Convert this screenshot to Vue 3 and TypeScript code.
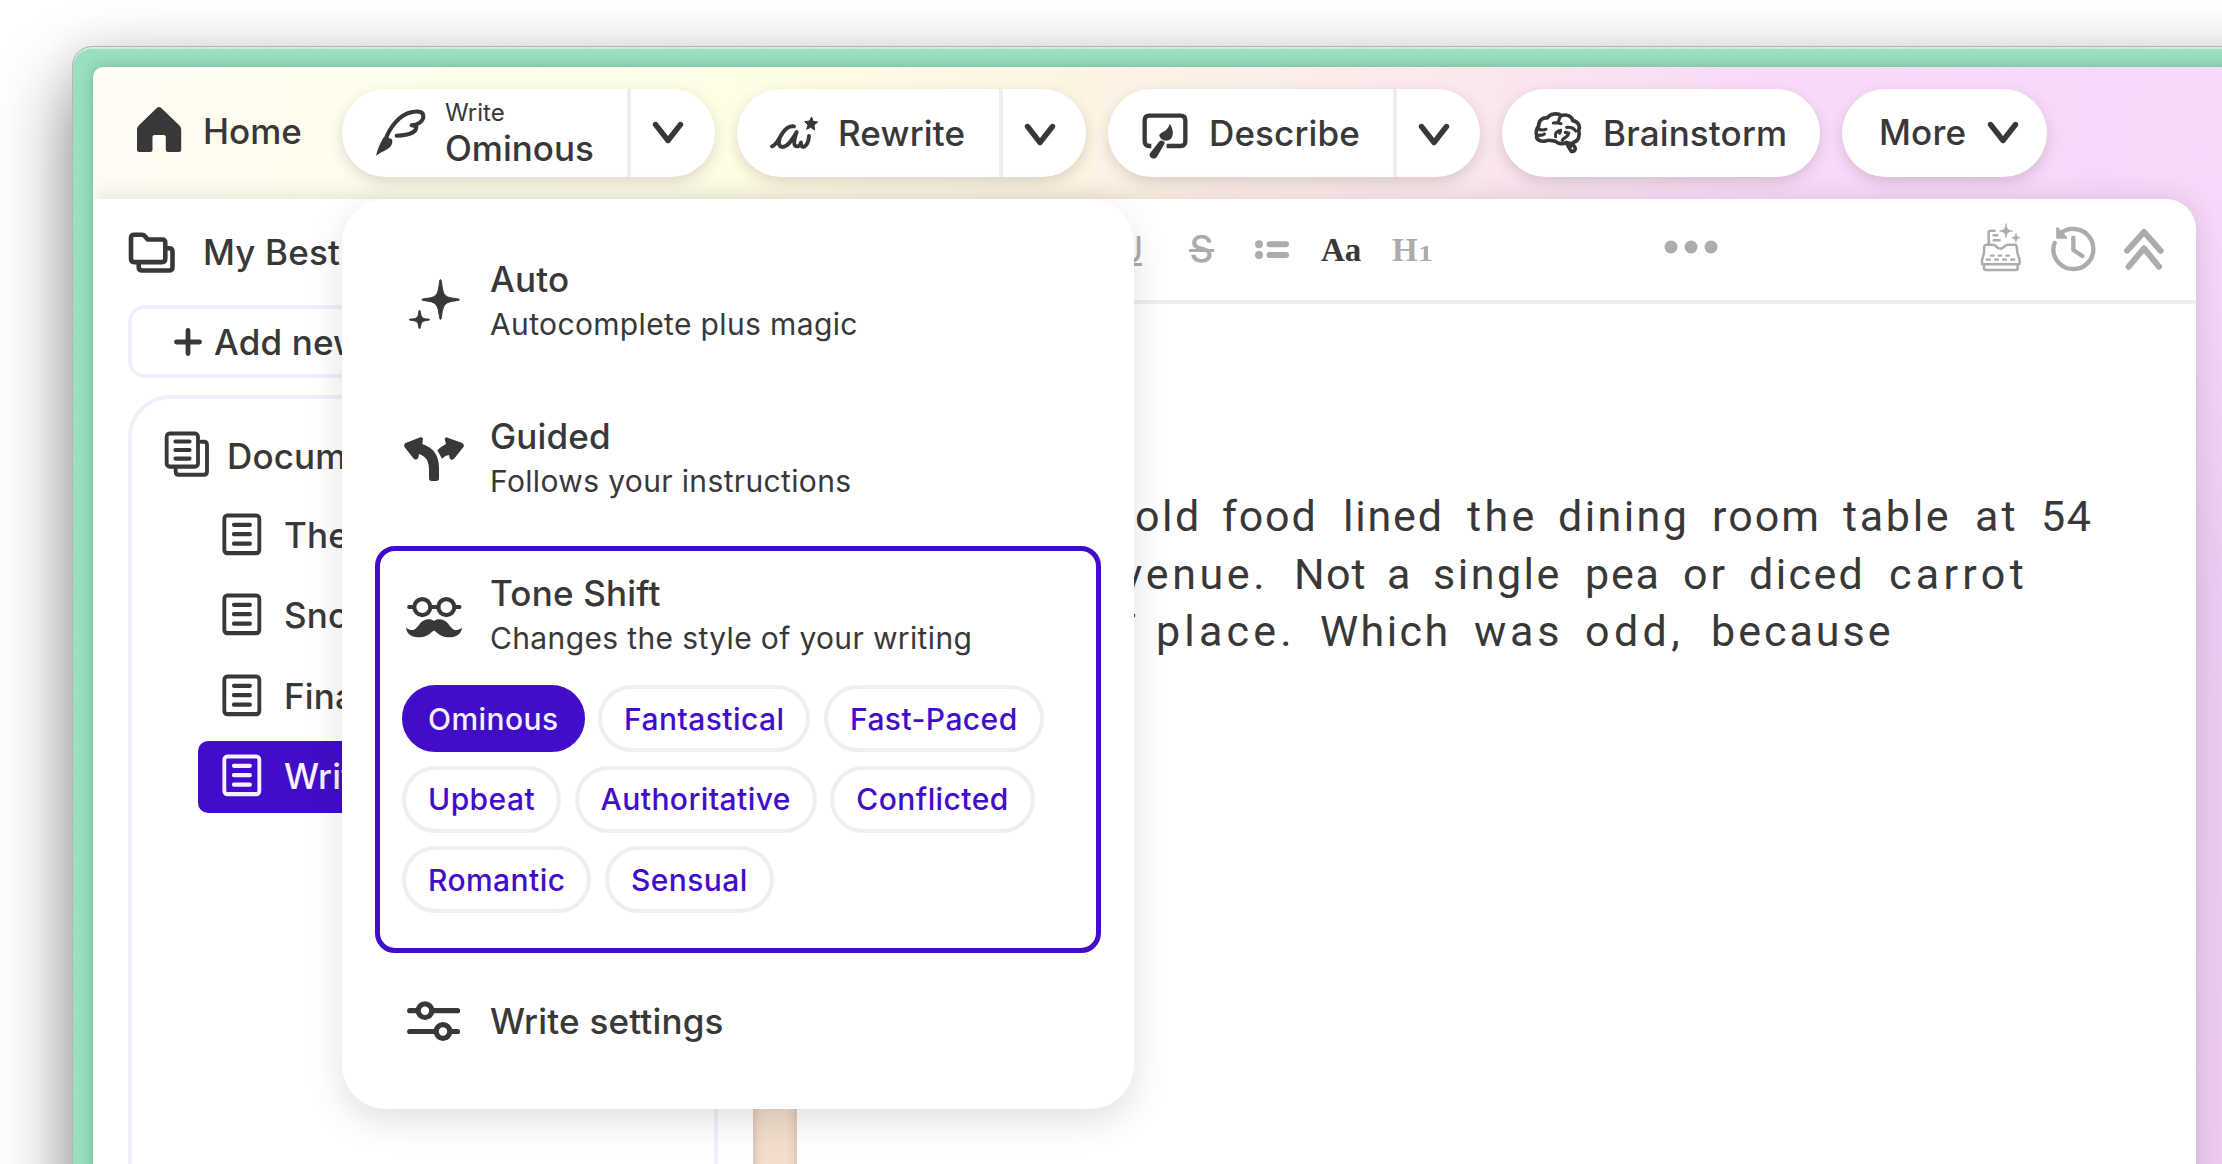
<script setup lang="ts">
import { ref } from 'vue'

interface Word { text: string; width: number; tracking: number }
interface Line { indent: number; words: Word[] }

const documents: { name: string; selected: boolean }[] = [
  { name: 'The End', selected: false },
  { name: 'Snow', selected: false },
  { name: 'Finale', selected: false },
  { name: 'Writing', selected: true },
]

const tones: string[][] = [
  ['Ominous', 'Fantastical', 'Fast-Paced'],
  ['Upbeat', 'Authoritative', 'Conflicted'],
  ['Romantic', 'Sensual'],
]
const activeTone = ref('Ominous')

const w = (text: string, width: number, tracking = 1.5): Word => ({ text, width, tracking })
const lines: Line[] = [
  {
    indent: 1110,
    words: [w('cold', 112, 2.5), w('food', 121, 1.8), w('lined', 124, 1.8), w('the', 91, 3.4), w('dining', 154, 2.4), w('room', 131, 2), w('table', 132, 2.7), w('at', 66, 3), w('54', 60, 1.5)],
  },
  {
    indent: 1091,
    words: [w('Avenue.', 203, 3.6), w('Not', 93, 1.2), w('a', 46), w('single', 152, 2.5), w('pea', 98, 1.8), w('or', 66, 3), w('diced', 140, 2.4), w('carrot', 150, 4.3)],
  },
  {
    indent: 1094,
    words: [w('of', 62), w('place.', 164, 4.2), w('Which', 154, 2.4), w('was', 111, 3.8), w('odd,', 126, 4.4), w('because', 200, 3)],
  },
]
</script>

<template>
  <div class="desk">
    <div class="frame">
      <svg class="grain" aria-hidden="true">
        <filter id="grain"><feTurbulence type="fractalNoise" baseFrequency="0.35" numOctaves="2" seed="4" /><feColorMatrix type="matrix" values="0 0 0 0 0.35  0 0 0 0 0.65  0 0 0 0 0.62  0 0 0 1.6 -0.62" /></filter>
        <rect width="100%" height="100%" filter="url(#grain)" />
      </svg>
      <div class="window">
        <header class="topbar">
          <div class="home">
            <svg width="46" height="48" viewBox="136 106 46 48"><path fill="#383838" d="M157 107.800Q159 106.200 161 107.800L179.500 125.500Q181.200 127.500 181.200 130V149.500Q181.200 152 178.700 152H168Q165.800 152 165.800 149.500V137Q165.800 135 163.800 135H154.500Q152.500 135 152.500 137V149.500Q152.500 152 150 152H139.500Q137 152 137 149.500V130Q137 127.500 138.700 125.500Z" /></svg>
            <span class="label">Home</span>
          </div>

          <div class="pill write">
            <div class="main">
              <svg width="52" height="48" viewBox="45 55 156 144" fill="none" stroke="#383838" stroke-width="12" stroke-linecap="round" stroke-linejoin="round">
                <path d="M76 150C88 117 116 74 157 67C176 64 191 65 190 82C189 96 172 106 155 107L169 110C171 124 155 137 110 138" />
                <path stroke="none" fill="#383838" d="M48 198C52 180 61 160 71 143L84 139C86 146 90 147 96 149C101 165 88 178 72 184C63 188 56 193 48 198Z" />
              </svg>
              <div class="two">
                <span class="small">Write</span>
                <span class="label">Ominous</span>
              </div>
            </div>
            <div class="drop"><svg class="chev" viewBox="0 0 32 24"><path d="M3.500 3.500L16 19.500L28.500 3.500" /></svg></div>
          </div>

          <div class="pill rewrite">
            <div class="main">
              <svg width="50" height="36" viewBox="1227 76 150 108" fill="none" stroke="#383838" stroke-width="11.500" stroke-linecap="round" stroke-linejoin="round">
                <path d="M1236 170C1251 165 1258 143 1269 128C1279 114 1290 108 1302 110M1268 130C1254 147 1252 171 1268 172C1286 171 1298 146 1310 127C1305 141 1301 153 1303 163C1306 174 1320 172 1323 158C1322 170 1327 173 1332 171C1342 166 1346 153 1347 139" />
                <path stroke-width="3" fill="#383838" d="M1355 83L1359 95L1373 97L1362 106L1364 121L1352 113L1340 119L1344 106L1334 96L1348 94Z" />
              </svg>
              <span class="label">Rewrite</span>
            </div>
            <div class="drop"><svg class="chev" viewBox="0 0 32 24"><path d="M3.500 3.500L16 19.500L28.500 3.500" /></svg></div>
          </div>

          <div class="pill describe">
            <div class="main">
              <svg width="46" height="48" viewBox="97 65 138 144" fill="none" stroke="#383838" stroke-width="13" stroke-linecap="butt">
                <path d="M125 167H119Q105 167 105 153V90Q105 76 119 76H213Q227 76 227 90V153Q227 167 213 167H171" />
                <path stroke="none" fill="#383838" d="M180 100C189 112 193 130 186 142C179 154 163 153 154 145L149 137C149 123 174 127 180 100ZM148 154Q156 146 165 155Q166 160 162 165L142 199Q136 208 126 203Q117 198 121 189Z" />
              </svg>
              <span class="label">Describe</span>
            </div>
            <div class="drop"><svg class="chev" viewBox="0 0 32 24"><path d="M3.500 3.500L16 19.500L28.500 3.500" /></svg></div>
          </div>

          <div class="pill brain">
            <svg width="50" height="46" viewBox="1270 60 150 138" fill="none" stroke="#383838" stroke-width="11" stroke-linecap="round" stroke-linejoin="round">
              <path d="M1281 137C1278 124 1280 116 1287 108C1286 93 1298 82 1313 84C1320 70 1345 68 1354 77C1371 71 1388 80 1389 92C1406 95 1413 109 1407 122C1412 138 1406 153 1392 157C1388 161 1378 160 1371 157C1360 163 1345 162 1338 154C1328 153 1320 148 1310 152C1295 157 1279 150 1281 137Z" />
              <path d="M1371 160C1376 168 1379 177 1385 184C1395 186 1399 178 1395 170C1392 165 1388 164 1384 168" />
              <path stroke-width="9.500" d="M1353 79C1346 85 1351 92 1343 98L1331 99M1343 98L1354 101M1284 116C1293 121 1301 121 1309 118M1286 137C1292 133 1298 139 1304 132M1371 112C1384 111 1393 115 1398 123M1377 129C1376 142 1363 141 1358 151M1377 129L1367 127M1353 121C1340 122 1335 132 1338 140M1353 121L1350 130" />
            </svg>
            <span class="label">Brainstorm</span>
          </div>

          <div class="pill more">
            <span class="label">More</span>
            <svg class="chev" viewBox="0 0 32 24"><path d="M3.500 3.500L16 19.500L28.500 3.500" /></svg>
          </div>
        </header>

        <div class="page">
          <aside class="sidebar">
            <div class="project">
              <svg width="48" height="42" viewBox="127.500 232.500 48 42" fill="none" stroke="#383838" stroke-width="4.600" stroke-linejoin="round">
                <path d="M130.500 238.500Q130.500 235.300 133.700 235.300H141.500Q143.300 235.300 144.500 236.800L147.200 240H161.500Q164.800 240 164.800 243.200V259.300Q164.800 262.600 161.500 262.600H133.700Q130.500 262.600 130.500 259.300Z" />
                <path d="M138.200 264V267.500Q138.200 271 141.700 271H168.500Q172 271 172 267.500V252Q172 248.700 168.700 248.700H166" />
              </svg>
              <span class="label">My Best</span>
            </div>
            <div class="add">
              <svg width="28" height="28" viewBox="0 0 28 28" stroke="#383838" stroke-width="4.800" stroke-linecap="round"><path d="M14 2.500V25.500M2.500 14H25.500" /></svg>
              <span class="label">Add new</span>
            </div>
            <div class="tree">
              <div class="root">
                <svg width="46" height="47" viewBox="192 424 138 132" preserveAspectRatio="none" fill="none" stroke="#383838" stroke-width="11.500" stroke-linecap="round" stroke-linejoin="round">
                  <rect x="200" y="431" width="94" height="93" rx="9" />
                  <path d="M303 454H312Q321 454 321 463V538Q321 547 312 547H236Q227 547 227 538V529M226 453.500H269M226 477.500H269M226 501.500H269" />
                </svg>
                <span class="label">Documents</span>
              </div>
              <div v-for="doc in documents" :key="doc.name" class="doc" :class="{ selected: doc.selected }">
                <svg width="40" height="43" viewBox="366 655 120 120" preserveAspectRatio="none" fill="none" stroke="currentColor" stroke-width="11.500" stroke-linecap="round">
                  <rect x="373" y="662" width="105" height="105" rx="9" />
                  <path d="M401.500 688H450M401.500 714H450M401.500 740.500H450" />
                </svg>
                <span class="label">{{ doc.name }}</span>
              </div>
            </div>
          </aside>

          <main class="editor">
            <div class="toolbar">
              <span class="fmt u">U</span>
              <span class="fmt s">S</span>
              <svg class="list" width="34" height="20" viewBox="0 0 34 20" fill="#acacac"><circle cx="4" cy="4.200" r="4" /><circle cx="4" cy="15" r="4" /><rect x="11.500" y="1.300" width="22.500" height="6" rx="3" /><rect x="11.500" y="12" width="22.500" height="6" rx="3" /></svg>
              <span class="serif aa">Aa</span>
              <span class="serif h1">H<small>1</small></span>
              <svg class="dots" width="54" height="14" viewBox="0 0 54 14" fill="#acacac"><circle cx="7" cy="7" r="6.500" /><circle cx="27" cy="7" r="6.500" /><circle cx="47" cy="7" r="6.500" /></svg>
              <svg class="tools" width="190" height="50" viewBox="120 70 570 150" fill="none" stroke="#acacac" stroke-linecap="round" stroke-linejoin="round">
                <g stroke-width="7.500">
                  <path d="M146 135V99Q146 93 152 93H164M161 107H172M161 122H179M138 135H160C168 135 169 147 181 147C193 147 194 135 203 135H224Q229 135 230 140L232 158C234 170 239 174 239 184V190Q239 194 234 194H130Q126 194 126 190V184C126 174 131 170 132 158L133 140Q134 135 138 135ZM132 196V205Q132 211 138 211H227Q233 211 233 205V196" />
                  <path d="M153 168H161M176 168H184M199 168H207M140 180H150M165 180H174M189 180H198M213 180H223" stroke-width="6.500" />
                </g>
                <path fill="#acacac" stroke="#acacac" stroke-width="2" d="M198 73C200 88 203 92 218 94C203 96 200 100 198 115C196 100 193 96 178 94C193 92 196 88 198 73ZM228 101C229 110 231 113 240 114C231 116 229 118 228 128C226 118 224 116 215 114C224 113 226 110 228 101Z" />
                <g stroke-width="13">
                  <path d="M362 101C375 90 390 87 403 88C435 90 460 115 460 148C460 181 434 208 400 208C367 208 340 181 340 149Q340 138 344 130M400 114V151L427 169" />
                  <path fill="#acacac" stroke-width="7" d="M352 86V114H378Z" />
                </g>
                <path stroke-width="18" d="M561 153L612 97L662 153M566 201L612 146L657 201" />
              </svg>
            </div>
            <div class="body">
              <div class="bar"></div>
              <div class="prose">
                <p v-for="(line, i) in lines" :key="i" :style="{ paddingLeft: line.indent - 797 + 'px' }">
                  <span v-for="word in line.words" :key="word.text" class="word" :style="{ width: word.width + 'px', letterSpacing: word.tracking + 'px' }">{{ word.text + ' ' }}</span>
                </p>
              </div>
            </div>
          </main>

          <div class="menu">
            <div class="item">
              <svg width="60" height="52" viewBox="132 110 180 156" fill="#383838" stroke="#383838" stroke-width="3" stroke-linejoin="round"><path d="M241 118C244 118 244 122 245 130C250 168 255 171 290 175C296 176 298 176 298 178C298 180 296 180 290 181C255 185 250 190 245 226C244 234 244 237 241 237C239 237 239 234 238 226C233 190 228 185 193 181C188 180 186 180 186 178C186 176 188 176 193 175C228 171 233 168 238 130C239 122 239 118 241 118ZM178.500 210C180 210 181 212 181.500 217C184 233 188 235 204 236Q209 237 209 238Q209 239 204 240C188 242 184 244 181.500 259Q181 265 178.500 265Q177 265 176 259C174 244 169 242 153 240Q148 239 148 238Q148 237 153 236C169 235 174 233 176 217C176.500 212 177 210 178.500 210Z" /></svg>
              <div class="copy"><span class="label">Auto</span><span class="sub">Autocomplete plus magic</span></div>
            </div>
            <div class="item">
              <svg width="60" height="52" viewBox="132 587 180 156" fill="#383838"><path d="M189 602L187 617C222 629 237 652 237 690V720Q237 728 229 728H215Q207 728 207 720V695C207 668 198 655 177 647L175 658Q170 667 162 662L134 627Q130 618 137 614L181 597Q189 596 189 602ZM232 636Q244 624 258 617L254 602Q256 595 263 598L307 614Q313 618 311 625L282 661Q274 667 270 661L267 650Q256 651 246 661Z" /></svg>
              <div class="copy"><span class="label">Guided</span><span class="sub">Follows your instructions</span></div>
            </div>
            <div class="item tone">
              <svg width="60" height="52" viewBox="912 871 180 146" preserveAspectRatio="none" fill="none" stroke="#383838" stroke-width="12"><ellipse cx="967" cy="916" rx="24" ry="22.500" /><ellipse cx="1039" cy="916" rx="24" ry="22.500" /><path stroke-linecap="round" stroke-width="11" d="M927 916H940M990 916H1016M1066 916H1079" /><path stroke="none" fill="#383838" d="M1002 955C993 947 972 949 962 960C950 974 941 990 918 974C920 997 945 1004 968 1000C985 997 994 987 1002 982C1010 987 1019 997 1036 1000C1059 1004 1084 997 1086 974C1063 990 1054 974 1042 960C1032 949 1011 947 1002 955Z" /></svg>
              <div class="copy"><span class="label">Tone Shift</span><span class="sub">Changes the style of your writing</span></div>
              <div class="chips">
                <div v-for="(row, i) in tones" :key="i" class="row">
                  <button v-for="tone in row" :key="tone" class="chip" :class="{ on: tone === activeTone }" @click="activeTone = tone">{{ tone }}</button>
                </div>
              </div>
            </div>
            <div class="item settings">
              <svg width="60" height="44" viewBox="404 999 60 44" fill="none" stroke="#383838" stroke-width="5.200" stroke-linecap="round"><path d="M409.700 1010.700H417M433 1010.700H457.500M409.700 1031.500H435M451 1031.500H457.500" /><circle cx="425" cy="1010.700" r="6.800" /><circle cx="443" cy="1031.500" r="6.800" /></svg>
              <span class="label">Write settings</span>
            </div>
          </div>
        </div>
      </div>
    </div>
  </div>
</template>

<style>
body { margin: 0; background: #fff; }
</style>

<style scoped>
* { box-sizing: border-box; }
svg { flex: none; display: block; }
.desk { position: relative; width: 2222px; height: 1164px; overflow: hidden; padding: 46px 0 0 72px; background: #fff; color: #383838; font-family: Inter, sans-serif; }
.frame { position: relative; width: 2400px; height: 1400px; padding: 20px; border: 1px solid #b4b4b4; border-radius: 20px; background: #9be0bf; box-shadow: inset 0 2px 1px rgba(255, 255, 255, .55), 0 36px 76px rgba(0, 0, 0, .48), 0 0 40px rgba(0, 0, 0, .07); }
.grain { position: absolute; inset: 0; width: 100%; height: 100%; border-radius: 20px; opacity: .45; }
.window { position: relative; height: 1340px; border-radius: 10px; overflow: hidden; background: linear-gradient(97deg, #fffcf5 0, #fffdeb 300px, #fffde6 640px, #fdf6e2 930px, #fbe9ec 1330px, #f8dbf8 1650px, #f8d8fa 2000px, #f5dcfb 2250px); }
.window::before { content: ''; position: absolute; inset: 100px 0 0 2000px; background: linear-gradient(180deg, rgba(234, 200, 240, 0), rgba(234, 200, 240, .9) 420px, #eccbee 1064px); }
.frame::after { content: ''; position: absolute; left: 20px; top: 20px; right: 20px; height: 1340px; border-radius: 10px; box-shadow: 0 0 14px rgba(20, 80, 60, .3); pointer-events: none; }
.topbar { position: relative; display: flex; height: 132px; padding-top: 22px; gap: 22px; }
.home { display: flex; align-items: flex-start; width: 227px; padding-left: 43px; }
.home svg { margin-top: 17px; }
.home .label { margin: 20px 0 0 21px; letter-spacing: 0; }
.label { font-size: 35px; line-height: 44px; font-weight: 500; letter-spacing: .15px; white-space: nowrap; }
.pill { display: flex; height: 88px; border-radius: 44px; background: #fff; box-shadow: 0 5px 14px rgba(60, 40, 40, .17); }
.main { display: flex; }
.drop { flex: 1; border-left: 4px solid #eee; }
.chev { width: 32px; height: 24px; fill: none; stroke: #383838; stroke-width: 5.400; stroke-linecap: round; stroke-linejoin: round; }
.write { width: 373px; }
.write .main { width: 285px; padding: 19px 0 0 33px; }
.two { display: flex; flex-direction: column; margin: -10px 0 0 18px; }
.small { font-size: 24px; line-height: 30px; }
.two .label { margin-top: -2px; letter-spacing: 0; }
.write .chev { margin: 32px 0 0 21px; }
.rewrite { width: 349px; }
.rewrite .main { width: 262px; padding: 26px 0 0 32px; }
.rewrite .label { margin: -4px 0 0 19px; }
.rewrite .chev { margin: 34px 0 0 21px; }
.describe { width: 372px; }
.describe .main { width: 285px; padding: 23px 0 0 34px; }
.describe .label { margin: -1px 0 0 21px; }
.describe .chev { margin: 34px 0 0 21px; }
.brain { width: 318px; padding: 21px 0 0 31px; }
.brain .label { margin: 1px 0 0 20px; }
.more { width: 205px; padding: 21px 0 0 37px; }
.more .chev { margin: 11px 0 0 21px; }

.page { position: relative; display: flex; width: 2103px; height: 1208px; border-radius: 0 30px 0 0; background: #fff; box-shadow: 0 0 26px rgba(70, 50, 60, .16); }
.sidebar { width: 625px; margin-right: 35px; padding-left: 35px; }
.project { display: flex; height: 106px; padding-top: 33px; }
.project .label { margin: -2px 0 0 27px; }
.add { display: flex; height: 73px; border: 4px solid #f2effc; border-radius: 17px; padding: 19px 0 0 42px; }
.add .label { margin: -8px 0 0 12px; }
.tree { height: 1000px; margin-top: 17px; border: 4px solid #f2effc; border-radius: 42px; padding: 32px 20px 0 32px; }
.root { display: flex; height: 66px; }
.root .label { margin: 3px 0 0 17px; }
.doc { display: flex; height: 72px; margin: 0 0 8.300px 34px; padding: 13px 0 0 24px; border-radius: 10px; }
.root + .doc { margin-top: 3px; }
.doc .label { margin: 0 0 0 22px; }
.doc.selected { background: #420dc8; color: #f4f0ff; }

.editor { flex: 1; display: flex; flex-direction: column; }
.toolbar { display: flex; align-items: flex-start; height: 105px; border-bottom: 4px solid #eee; padding-left: 363px; color: #acacac; }
.fmt { font-size: 37px; line-height: 36px; }
.fmt.u { width: 26px; height: 34px; margin-top: 33px; text-align: center; border-bottom: 3px solid #acacac; }
.fmt.s { position: relative; width: 25px; margin: 32px 0 0 47px; text-align: center; font-weight: 500; }
.fmt.s::after { content: ''; position: absolute; left: 0; right: 0; top: 18px; height: 3px; background: #acacac; }
.list { margin: 41px 0 0 41px; }
.serif { font: bold 33px/36px "Liberation Serif", serif; }
.aa { width: 40px; margin: 33px 0 0 32px; color: #383838; }
.h1 { width: 42px; margin: 33px 0 0 31px; }
.h1 small { display: inline-block; font-size: 24px; transform: scaleX(1.25); transform-origin: left; }
.dots { margin: 41px 0 0 230px; }
.tools { margin: 24px 0 0 262px; }
.body { display: flex; flex: 1; }
.bar { width: 44px; background: #f3decd; box-shadow: inset 8px 0 8px -6px rgba(120, 90, 70, .25), inset -8px 0 8px -6px rgba(120, 90, 70, .25); }
.prose { padding-top: 184px; }
.prose p { display: flex; margin: 0; height: 57.700px; font-family: Roboto, sans-serif; font-size: 43px; line-height: 57.700px; white-space: pre; }
.word { flex: none; }

.menu { position: absolute; left: 249px; top: 0; width: 792px; height: 910px; padding: 33px; border-radius: 44px; background: #fff; box-shadow: 0 12px 36px rgba(0, 0, 0, .12); }
.item { display: flex; flex-wrap: wrap; align-content: flex-start; height: 157px; padding: 25px 0 0 29px; }
.item > svg { margin-top: 20px; }
.copy { display: flex; flex-direction: column; margin-left: 26px; }
.copy .label { line-height: 44px; }
.sub { font-size: 30px; line-height: 40px; margin-top: 3px; letter-spacing: .36px; white-space: nowrap; }
.tone { width: 726px; height: 407px; border: 5px solid #420dc8; border-radius: 20px; padding: 20px 0 0 24px; }
.tone .label { letter-spacing: .2px; }
.chips { display: flex; flex-direction: column; gap: 13.500px; width: 100%; margin: 27px 0 0 -2px; }
.row { display: flex; gap: 13.500px; }
.chip { height: 67px; border: 4px solid #efefef; border-radius: 34px; padding: 0 22px; background: #fff; color: #420dc8; font: 500 30px/58px Inter, sans-serif; letter-spacing: .43px; }
.chip.on { background: #420dc8; border-color: #420dc8; color: #f4f0ff; }
.settings { padding-top: 46px; }
.settings > svg { margin-top: 0; }
.settings .label { margin-left: 26px; letter-spacing: .2px; }
</style>
